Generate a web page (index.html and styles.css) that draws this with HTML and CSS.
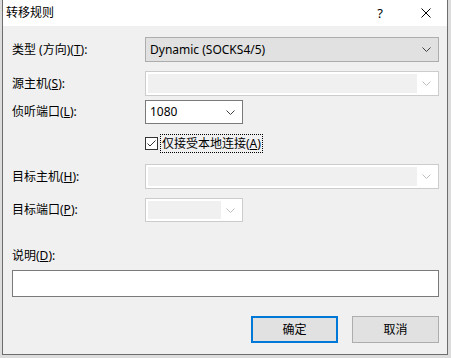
FILE: index.html
```html
<!DOCTYPE html>
<html>
<head>
  <meta charset="utf-8">
  <title>转移规则</title>
  <link rel="stylesheet" href="styles.css">
</head>
<body>
  <div class="dialog">
    <div class="titlebar">
      <span class="title">转移规则</span>
      <span class="help">?</span>
      <span class="close">
        <svg width="10" height="10" viewBox="0 0 10 10"><path d="M0.5 0.5 L9.5 9.5 M9.5 0.5 L0.5 9.5" stroke="#000" stroke-width="1" fill="none"/></svg>
      </span>
    </div>
    <div class="content">
      <div class="row row-type">
        <span class="label">类型 (方向)(<u>T</u>):</span>
        <div class="combo combo-btn wide">
          <span class="value">Dynamic (SOCKS4/5)</span>
          <svg class="arrow" width="9" height="5" viewBox="0 0 9 5"><polyline points="0.5,0.5 4.5,4.5 8.5,0.5" stroke="#404040" fill="none"/></svg>
        </div>
      </div>
      <div class="row row-src">
        <span class="label">源主机(<u>S</u>):</span>
        <div class="combo combo-off wide">
          <span class="field"></span>
          <svg class="arrow" width="9" height="5" viewBox="0 0 9 5"><polyline points="0.5,0.5 4.5,4.5 8.5,0.5" stroke="#bfbfbf" fill="none"/></svg>
        </div>
      </div>
      <div class="row row-port">
        <span class="label">侦听端口(<u>L</u>):</span>
        <div class="combo combo-edit narrow">
          <span class="value">1080</span>
          <svg class="arrow" width="9" height="5" viewBox="0 0 9 5"><polyline points="0.5,0.5 4.5,4.5 8.5,0.5" stroke="#404040" fill="none"/></svg>
        </div>
      </div>
      <div class="row row-check">
        <span class="label"></span>
        <span class="checkbox">
          <svg width="13" height="13" viewBox="0 0 13 13"><rect x="0.5" y="0.5" width="12" height="12" fill="#fff" stroke="#333"/><polyline points="2.5,6.5 5,9 10.5,3.5" stroke="#333" stroke-width="1" fill="none"/></svg>
        </span>
        <span class="check-label">仅接受本地连接(<u>A</u>)</span>
      </div>
      <div class="row row-dst">
        <span class="label">目标主机(<u>H</u>):</span>
        <div class="combo combo-off wide">
          <span class="field"></span>
          <svg class="arrow" width="9" height="5" viewBox="0 0 9 5"><polyline points="0.5,0.5 4.5,4.5 8.5,0.5" stroke="#bfbfbf" fill="none"/></svg>
        </div>
      </div>
      <div class="row row-dport">
        <span class="label">目标端口(<u>P</u>):</span>
        <div class="combo combo-off narrow">
          <span class="field"></span>
          <svg class="arrow" width="9" height="5" viewBox="0 0 9 5"><polyline points="0.5,0.5 4.5,4.5 8.5,0.5" stroke="#bfbfbf" fill="none"/></svg>
        </div>
      </div>
      <div class="desc-label">说明(<u>D</u>):</div>
      <div class="textbox"></div>
      <div class="buttons">
        <span class="button default">确定</span>
        <span class="button">取消</span>
      </div>
    </div>
  </div>
</body>
</html>
```
FILE: styles.css
```css
body {
  margin: 0;
  background-color: #dcdcdc;
  font-family: "Noto Sans", "Noto Sans CJK SC", sans-serif;
  font-size: 12px;
  line-height: 16px;
  color: #000;
}
.dialog {
  box-sizing: border-box;
  margin-left: 2px;
  width: 446px;
  height: 355px;
  border: 1px solid #6d6d6d;
  border-top: 0;
  background-color: #f0f0f0;
}
.titlebar {
  display: flex;
  align-items: center;
  height: 26px;
  padding-left: 3px;
  background-color: #fff;
}
.title {
  flex: 1;
  font-size: 12px;
}
.help {
  width: 14px;
  margin-right: 34px;
  text-align: center;
  font-size: 13px;
}
.close {
  display: flex;
  margin-right: 16px;
}
.content {
  display: flex;
  flex-direction: column;
  padding: 0 8px 0 9px;
}
.row {
  display: flex;
  align-items: center;
  height: 25px;
}
.label {
  width: 133px;
  flex: none;
}
.row-type  { margin-top: 11px; }
.row-src   { margin-top: 9px; }
.row-port  { margin-top: 4px; height: 24px; }
.row-check { margin-top: 10px; height: 19px; }
.row-dst   { margin-top: 11px; }
.row-dport { margin-top: 9px; height: 24px; }

.combo {
  box-sizing: border-box;
  display: flex;
  align-items: center;
  height: 100%;
  border: 1px solid #adadad;
}
.combo.wide   { width: 294px; }
.combo.narrow { width: 98px; }
.combo .value {
  flex: 1;
  padding-left: 4px;
}
.combo .arrow {
  flex: none;
  margin: 0 7px 0 5px;
}
.combo-btn {
  background-color: #e1e1e1;
}
.combo-edit {
  background-color: #fff;
  border-color: #7a7a7a;
}
.combo-off {
  background-color: #fff;
  border-color: #cccccc;
}
.combo-off .field {
  flex: 1;
  align-self: stretch;
  margin: 2px 0 2px 2px;
  background-color: #f0f0f0;
}
.checkbox {
  display: flex;
  margin-right: 2px;
}
.check-label {
  box-sizing: border-box;
  height: 19px;
  padding: 1px 1px 0 1px;
  border: 1px dotted #000;
}
.desc-label {
  margin-top: 26px;
}
.textbox {
  box-sizing: border-box;
  margin-top: 6px;
  height: 27px;
  border: 1px solid #7a7a7a;
  background-color: #fff;
}
.buttons {
  display: flex;
  justify-content: flex-end;
  gap: 14px;
  margin-top: 19px;
}
.button {
  box-sizing: border-box;
  display: flex;
  align-items: center;
  justify-content: center;
  width: 87px;
  height: 27px;
  border: 1px solid #adadad;
  background-color: #e1e1e1;
}
.button.default {
  border: 2px solid #0078d7;
}
```
